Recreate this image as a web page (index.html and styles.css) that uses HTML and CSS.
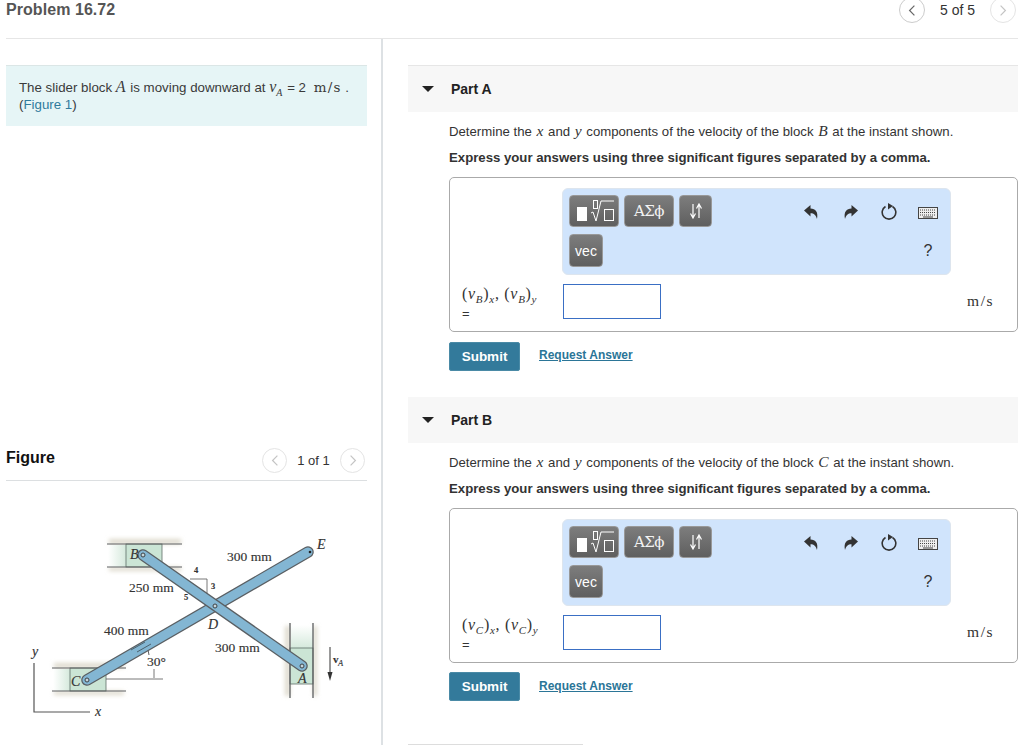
FILE: index.html
```html
<!DOCTYPE html>
<html lang="en">
<head>
<meta charset="utf-8">
<title>Problem 16.72</title>
<link rel="stylesheet" href="styles.css">
</head>
<body>
<header class="top">
  <h1 class="title">Problem 16.72</h1>
  <nav class="pager pager-top">
    <span class="circle"><svg class="chev" viewBox="0 0 10 16"><path d="M8 2 2 8l6 6"/></svg></span>
    <span class="count">5 of 5</span>
    <span class="circle off"><svg class="chev" viewBox="0 0 10 16"><path d="M2 2l6 6-6 6"/></svg></span>
  </nav>
</header>
<main class="layout">
  <aside class="left">
    <div class="info">The slider block <i class="m">A</i> is moving downward at <i class="m">v<sub>A</sub></i> = 2 <span class="mu">m/s</span> .<br>(<a class="flink">Figure 1</a>)</div>
    <div class="fighead">
      <h2 class="figtitle">Figure</h2>
      <nav class="pager">
        <span class="circle off"><svg class="chev" viewBox="0 0 10 16"><path d="M8 2 2 8l6 6"/></svg></span>
        <span class="count">1 of 1</span>
        <span class="circle off"><svg class="chev" viewBox="0 0 10 16"><path d="M2 2l6 6-6 6"/></svg></span>
      </nav>
    </div>
    <svg class="figure" viewBox="6 481 361 264" xmlns="http://www.w3.org/2000/svg">
      <defs>
        <linearGradient id="fadeH" x1="0" x2="1" y1="0" y2="0"><stop offset="0" stop-color="#fff"/><stop offset="1" stop-color="#d5e9dc"/></linearGradient>
        <linearGradient id="fadeV" x1="0" x2="0" y1="0" y2="1"><stop offset="0" stop-color="#fff"/><stop offset="1" stop-color="#d5e9dc"/></linearGradient>
        <filter id="soft" x="-20%" y="-60%" width="140%" height="220%"><feGaussianBlur stdDeviation="2"/></filter>
      </defs>
      <!-- slide shadows -->
      <g fill="#dedacd" filter="url(#soft)">
        <rect x="109" y="539" width="72" height="5"/><rect x="109" y="567" width="72" height="4"/>
        <rect x="54" y="663" width="70" height="5"/><rect x="54" y="691" width="70" height="4"/>
        <rect x="285" y="626" width="5" height="70"/><rect x="313" y="626" width="4" height="70"/>
      </g>
      <!-- slider B -->
      <rect x="108" y="545" width="18" height="22" fill="url(#fadeH)"/>
      <rect x="126" y="544" width="36" height="23" fill="#cbe5d5" stroke="#5f6f68" stroke-width=".8"/>
      <path d="M107 544h75M107 567h75" stroke="#5c5f60" stroke-width="1.2"/>
      <!-- slider C -->
      <rect x="53" y="669" width="17" height="22" fill="url(#fadeH)"/>
      <rect x="70" y="668" width="36" height="23" fill="#cbe5d5" stroke="#5f6f68" stroke-width=".8"/>
      <path d="M52 668h74M52 691h74" stroke="#5c5f60" stroke-width="1.2"/>
      <!-- slider A -->
      <rect x="291" y="625" width="22" height="23" fill="url(#fadeV)"/>
      <rect x="290" y="648" width="23" height="36" fill="#cbe5d5" stroke="#5f6f68" stroke-width=".8"/>
      <path d="M290 623v75M313 623v75" stroke="#5c5f60" stroke-width="1.3"/>
      <!-- dimension lines -->
      <path d="M106 679h57M154 669v9M190 579h17v14" fill="none" stroke="#555" stroke-width=".8"/>
      <path d="M146 647q3 4 3 8" fill="none" stroke="#333" stroke-width=".8"/>
      <!-- bar C-E -->
      <line x1="87" y1="680" x2="308" y2="552" stroke="#5a5f63" stroke-width="11.500" stroke-linecap="round"/>
      <line x1="87" y1="680" x2="308" y2="552" stroke="#83b6d3" stroke-width="9" stroke-linecap="round"/>
      <path d="M131 650l14-8M137 652l14-8" stroke="#3c4a52" stroke-width=".8"/>
      <!-- bar B-A -->
      <line x1="143" y1="555" x2="302" y2="666" stroke="#5a5f63" stroke-width="11.500" stroke-linecap="round"/>
      <line x1="143" y1="555" x2="302" y2="666" stroke="#83b6d3" stroke-width="9" stroke-linecap="round"/>
      <!-- pins -->
      <g fill="#c5d5dc" stroke="#3d4347" stroke-width="1">
        <circle cx="143" cy="555" r="2"/><circle cx="87" cy="680" r="2"/>
        <circle cx="215" cy="606" r="2"/><circle cx="302" cy="666" r="2"/>
      </g>
      <circle cx="310" cy="552" r="1.300" fill="#222"/>
      <!-- velocity arrow -->
      <path d="M330 647v28" stroke="#333" stroke-width="1"/>
      <path d="M327.500 672h5L330 681z" fill="#333"/>
      <!-- axes -->
      <path d="M34 663v49h56" fill="none" stroke="#555" stroke-width="1.2"/>
      <!-- labels -->
      <g class="figtext">
        <text x="227" y="561">300 mm</text>
        <text x="129" y="592">250 mm</text>
        <text x="104" y="635">400 mm</text>
        <text x="215" y="652">300 mm</text>
        <text x="147" y="666">30°</text>
        <text class="fi" x="130" y="559">B</text>
        <text class="fi" x="71" y="686">C</text>
        <text class="fi" x="208" y="629">D</text>
        <text class="fi" x="317" y="549">E</text>
        <text class="fi" x="298" y="683">A</text>
        <text class="fi" x="32" y="656">y</text>
        <text class="fi" x="95" y="716">x</text>
        <text class="fs" x="194" y="573">4</text>
        <text class="fs" x="211" y="589">3</text>
        <text class="fs" x="184" y="600">5</text>
        <text class="fb" x="333" y="663">v</text>
        <text class="fs fit" x="338" y="666">A</text>
      </g>
    </svg>
  </aside>

  <section class="right">
    <article class="part">
      <h2 class="parthead"><span class="tri"></span>Part A</h2>
      <div class="partbody">
        <p class="q">Determine the <i class="m">x</i> and <i class="m">y</i> components of the velocity of the block <i class="m">B</i> at the instant shown.</p>
        <p class="q strong">Express your answers using three significant figures separated by a comma.</p>
        <div class="answer">
          <div class="toolbar">
            <div class="tbrow">
              <div class="btns">
                <span class="btn wide"><svg class="tmpl" viewBox="0 0 44 26"><rect x="5" y="9" width="10" height="14" fill="#fff"/><rect x="21.500" y="2.500" width="4" height="8" fill="none" stroke="#fff"/><path d="M19 15l2-1 3 9 5-20h13" fill="none" stroke="#fff"/><rect x="32.500" y="11.500" width="9" height="11" fill="none" stroke="#fff"/></svg></span>
                <span class="btn wide greek">ΑΣϕ</span>
                <span class="btn arrows"><svg class="updown" viewBox="0 0 14 16"><path d="M4 1v13M1.500 10.500 4 15l2.500-4.500M10 15V2M7.500 5.500 10 1l2.500 4.500" fill="none" stroke="#fff" stroke-width="1.200"/></svg></span>
              </div>
              <div class="tools">
                <svg class="ico" viewBox="0 0 16 16"><path d="M1 6.500 7.500 1v3.500c5 0 8 3.500 6.500 10.500-1-4-3-5.800-6.500-5.800V12.500z"/></svg>
                <svg class="ico" viewBox="0 0 16 16"><path d="M15 6.500 8.500 1v3.500c-5 0-8 3.500-6.500 10.500 1-4 3-5.800 6.500-5.800V12.500z"/></svg>
                <svg class="ico ring" viewBox="0 0 16 17"><path class="arc" d="M11.500 3.500A6.800 6.800 0 1 1 4.500 3.500"/><path d="M7 0l5 3-5 3.500z"/></svg>
                <svg class="kbd" viewBox="0 0 20 12"><rect x=".5" y=".5" width="19" height="11" fill="#eee" stroke="#444"/><path d="M2 3h16M2 5.500h16M2 8h16" stroke="#444" stroke-dasharray="1 1"/><path d="M5 10h10" stroke="#444"/></svg>
              </div>
            </div>
            <div class="tbrow">
              <span class="btn vec">vec</span>
              <span class="help">?</span>
            </div>
          </div>
          <div class="inrow">
            <div class="lhs"><span class="mexp">(<i>v<sub>B</sub></i>)<sub><i>x</i></sub>, (<i>v<sub>B</sub></i>)<sub><i>y</i></sub></span><br><span class="eq">=</span></div>
            <input class="field" type="text" aria-label="answer">
            <span class="unit">m/s</span>
          </div>
        </div>
        <div class="actions"><button class="submit">Submit</button><a class="req">Request Answer</a></div>
      </div>
    </article>

    <article class="part">
      <h2 class="parthead"><span class="tri"></span>Part B</h2>
      <div class="partbody">
        <p class="q">Determine the <i class="m">x</i> and <i class="m">y</i> components of the velocity of the block <i class="m">C</i> at the instant shown.</p>
        <p class="q strong">Express your answers using three significant figures separated by a comma.</p>
        <div class="answer">
          <div class="toolbar">
            <div class="tbrow">
              <div class="btns">
                <span class="btn wide"><svg class="tmpl" viewBox="0 0 44 26"><rect x="5" y="9" width="10" height="14" fill="#fff"/><rect x="21.500" y="2.500" width="4" height="8" fill="none" stroke="#fff"/><path d="M19 15l2-1 3 9 5-20h13" fill="none" stroke="#fff"/><rect x="32.500" y="11.500" width="9" height="11" fill="none" stroke="#fff"/></svg></span>
                <span class="btn wide greek">ΑΣϕ</span>
                <span class="btn arrows"><svg class="updown" viewBox="0 0 14 16"><path d="M4 1v13M1.500 10.500 4 15l2.500-4.500M10 15V2M7.500 5.500 10 1l2.500 4.500" fill="none" stroke="#fff" stroke-width="1.200"/></svg></span>
              </div>
              <div class="tools">
                <svg class="ico" viewBox="0 0 16 16"><path d="M1 6.500 7.500 1v3.500c5 0 8 3.500 6.500 10.500-1-4-3-5.800-6.500-5.800V12.500z"/></svg>
                <svg class="ico" viewBox="0 0 16 16"><path d="M15 6.500 8.500 1v3.500c-5 0-8 3.500-6.500 10.500 1-4 3-5.800 6.500-5.800V12.500z"/></svg>
                <svg class="ico ring" viewBox="0 0 16 17"><path class="arc" d="M11.500 3.500A6.800 6.800 0 1 1 4.500 3.500"/><path d="M7 0l5 3-5 3.500z"/></svg>
                <svg class="kbd" viewBox="0 0 20 12"><rect x=".5" y=".5" width="19" height="11" fill="#eee" stroke="#444"/><path d="M2 3h16M2 5.500h16M2 8h16" stroke="#444" stroke-dasharray="1 1"/><path d="M5 10h10" stroke="#444"/></svg>
              </div>
            </div>
            <div class="tbrow">
              <span class="btn vec">vec</span>
              <span class="help">?</span>
            </div>
          </div>
          <div class="inrow">
            <div class="lhs"><span class="mexp">(<i>v<sub>C</sub></i>)<sub><i>x</i></sub>, (<i>v<sub>C</sub></i>)<sub><i>y</i></sub></span><br><span class="eq">=</span></div>
            <input class="field" type="text" aria-label="answer">
            <span class="unit">m/s</span>
          </div>
        </div>
        <div class="actions"><button class="submit">Submit</button><a class="req">Request Answer</a></div>
      </div>
    </article>
    <div class="nextrule"></div>
  </section>
</main>
</body>
</html>
```
FILE: styles.css
```css
* { box-sizing: border-box; }
html, body { margin: 0; height: 745px; overflow: hidden; background: #fff; }
body { font-family: "Liberation Sans", Arial, sans-serif; font-size: 13px; color: #333; }

.top { height: 39px; margin: 0 6px; display: flex; justify-content: space-between; align-items: flex-start; border-bottom: 1px solid #e6e6e6; }
.title { margin: 1px 0 0; font-size: 16px; line-height: 18px; letter-spacing: .06px; font-weight: bold; color: #555; }
.pager { display: flex; align-items: center; }
.pager-top { margin-top: -3px; padding-right: 2px; }
.pager-top .count { width: 65px; font-size: 14px; }
.circle { width: 26px; height: 26px; border: 1px solid #ccc; border-radius: 50%; display: flex; align-items: center; justify-content: center; }
.circle.off { border-color: #e4e4e4; }
.chev { width: 8px; height: 13px; fill: none; stroke: #666; stroke-width: 1.5; }
.off .chev { stroke: #c4c4c4; }
.count { width: 52px; text-align: center; color: #333; font-size: 13px; }

.layout { display: flex; height: 706px; }
.left { width: 383px; padding: 26px 14px 0 6px; border-right: 2px solid #dde1e4; }
.info { height: 61px; padding: 12px 13px 0; border-top: 1px solid #dbe6e6; background: #e6f5f6; line-height: 17px; font-size: 13.300px; color: #3a3a3a; white-space: nowrap; }
.m { font-family: "Liberation Serif", serif; font-size: 16px; }
.m sub { font-size: 10px; line-height: 0; }
.info .m { padding-right: 1px; }
.mu { font-family: "DejaVu Serif", serif; font-size: 13.500px; letter-spacing: 1.200px; margin-left: 4px; }
.flink { color: #2f7b9d; }
.fighead { margin-top: 321px; height: 34px; display: flex; justify-content: space-between; align-items: center; border-bottom: 1px solid #dcdfe1; }
.figtitle { margin: 0; font-size: 16px; font-weight: bold; color: #111; position: relative; top: -6px; }
.fighead .pager { padding-right: 2px; position: relative; top: -3px; }
.fighead .circle { width: 25px; height: 25px; }
.fighead .count { width: 53px; font-size: 13px; }
.figure { display: block; width: 361px; height: 264px; }
.figtext text { font-family: "Liberation Serif", serif; font-size: 13.500px; fill: #333; stroke: #333; stroke-width: .15px; }
.figtext .fi { font-style: italic; font-size: 14px; }
.figtext .fs { font-size: 8.500px; font-weight: bold; }
.figtext .fit { font-style: italic; font-weight: normal; }
.figtext .fb { font-weight: bold; font-size: 11px; }

.right { width: 635px; padding-left: 25px; padding-top: 26px; }
.part { margin-bottom: 26px; }
.part + .part { margin-bottom: 0; }
.part:first-child .parthead { border-top: 1px solid #e6e6e6; }
.part + .part .parthead { height: 46px; }
.parthead { margin: 0; height: 47px; display: flex; align-items: center; background: #f7f7f7; font-size: 14px; font-weight: bold; color: #222; }
.tri { width: 0; height: 0; margin: 0 17px 0 14px; border-left: 6px solid transparent; border-right: 6px solid transparent; border-top: 6px solid #222; }
.partbody { padding-left: 41px; }
.q { margin: 0; height: 30px; padding-top: 10px; line-height: 17px; font-size: 13.200px; color: #333; white-space: nowrap; }
.q .m { font-size: 15.500px; padding: 0 1px; }
.q.strong { height: 35px; padding-top: 7px; font-size: 13.200px; font-weight: bold; }

.answer { height: 155px; border: 1px solid #aaa; border-radius: 5px; padding: 10px 23px 0 12px; }
.toolbar { width: 389px; height: 87px; margin-left: 100px; padding: 6px 12px 7px 6px; background: #d0e4fc; border: 1px solid #dde5ee; border-radius: 6px; display: flex; flex-direction: column; justify-content: space-between; }
.tbrow { display: flex; justify-content: space-between; align-items: center; }
.btns { display: flex; gap: 5px; }
.btn { height: 33px; display: flex; align-items: center; justify-content: center; color: #fff; border-radius: 4px; border: 1px solid #999; background: linear-gradient(#7d7d7d, #5f5f5f); }
.btns .btn { height: 32px; }
.wide { width: 50px; }
.greek { font-family: "DejaVu Serif", serif; font-size: 15px; letter-spacing: -.5px; padding-bottom: 1px; color: #f2f2f2; }
.arrows { width: 33px; }
.updown { width: 14px; height: 16px; }
.vec { width: 34px; font-size: 14px; }
.tmpl { width: 44px; height: 26px; }
.tools { display: flex; align-items: center; gap: 24px; padding-top: 1px; }
.ico { width: 16px; height: 16px; fill: #333; }
.ring { height: 17px; margin-left: -2px; }
.arc { fill: none; stroke: #333; stroke-width: 1.6; }
.kbd { width: 20px; height: 12px; margin: 2px 0 0 -3px; }
.help { width: 20px; font-size: 16px; text-align: center; color: #333; }

.inrow { display: flex; margin-top: 9px; }
.lhs { width: 101px; line-height: 19px; font-size: 13px; white-space: nowrap; }
.mexp { font-family: "Liberation Serif", serif; font-size: 16px; letter-spacing: .7px; }
.mexp sub { font-size: 11px; line-height: 0; }
.eq { font-size: 13px; }
.field { width: 98px; height: 35px; border: 1px solid #3a6fc4; background: #fff; padding: 0; margin: 0; }
.unit { margin-left: auto; padding-top: 8px; font-family: "Liberation Serif", serif; font-size: 15.500px; letter-spacing: 1.500px; color: #333; }

.actions { display: flex; align-items: center; margin-top: 9px; }
.part:first-child .actions { margin-top: 10px; }
.submit { width: 71px; height: 29px; padding: 0; border: 1px solid #4a8aa6; border-radius: 2px; background: #337a9b; color: #fff; font: bold 13.500px "Liberation Sans", Arial, sans-serif; }
.req { margin-left: 19px; color: #2b7597; font-size: 12px; font-weight: bold; text-decoration: underline; position: relative; top: -1px; }
.part:first-child .req { top: -2px; }
.nextrule { width: 175px; margin-top: 43px; border-top: 1px solid #ddd; }
```
